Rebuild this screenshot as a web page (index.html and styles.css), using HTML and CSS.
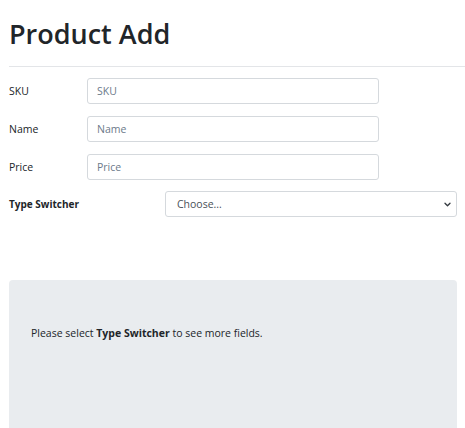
FILE: index.html
```html
<!DOCTYPE html>
<html>
<head>
<meta charset="utf-8">
<link rel="stylesheet" href="styles.css">
</head>
<body>
<div class="page">
  <h1 class="title">Product Add</h1>
  <hr class="rule">
  <form class="form">
    <div class="row">
      <label class="label" for="sku">SKU</label>
      <input class="input" id="sku" placeholder="SKU">
    </div>
    <div class="row">
      <label class="label" for="name">Name</label>
      <input class="input" id="name" placeholder="Name">
    </div>
    <div class="row">
      <label class="label" for="price">Price</label>
      <input class="input" id="price" placeholder="Price">
    </div>
    <div class="row row-type">
      <label class="label label-bold" for="type">Type Switcher</label>
      <div class="select">
        <span class="select-text">Choose...</span>
        <svg class="chevron" width="7" height="5" viewBox="0 0 16 12"><path d="M2 3l6 6 6-6" fill="none" stroke="#343a40" stroke-width="3.2" stroke-linecap="round" stroke-linejoin="round"/></svg>
      </div>
    </div>
  </form>
  <div class="info">
    <p class="info-text">Please select <b>Type Switcher</b> to see more fields.</p>
  </div>
</div>
</body>
</html>
```

FILE: styles.css
```css
* { box-sizing: border-box; }
html, body { margin: 0; padding: 0; background: #fff; }
body {
  font-family: "Open Sans", "Noto Sans", sans-serif;
  color: #212529;
  font-size: 10.5px;
  overflow: hidden;
}
.page {
  padding: 0 0 0 9px;
}
.title {
  margin: 0;
  padding-top: 15px;
  font-size: 27px;
  font-weight: 600;
  line-height: 38px;
  letter-spacing: 0;
  color: #212529;
}
.rule {
  margin: 13px 0 0 0;
  border: 0;
  border-top: 1px solid #e3e5e8;
}
.form {
  margin-top: 11px;
  display: flex;
  flex-direction: column;
  gap: 12px;
}
.row {
  display: flex;
  align-items: center;
  height: 26px;
}
.label {
  width: 78px;
  flex: none;
  font-size: 10.5px;
  color: #212529;
}
.label-bold { font-weight: 700; width: 156px; font-size: 10px; }
.row-type { margin-top: -1px; }
.input {
  width: 292px;
  height: 26px;
  border: 1px solid #d5d9dd;
  border-radius: 3px;
  padding: 0 9px;
  font-family: inherit;
  font-size: 10.5px;
  color: #495057;
  outline: none;
}
.input::placeholder { color: #6c7a8a; }
.select {
  width: 292px;
  height: 26px;
  border: 1px solid #d5d9dd;
  border-radius: 3px;
  padding: 0 5px 0 11px;
  display: flex;
  align-items: center;
  justify-content: space-between;
  font-size: 10.5px;
  color: #495057;
}
.chevron { display: block; }
.info {
  margin-top: 63px;
  width: 448px;
  height: 160px;
  background: #e9ecef;
  border-radius: 4px;
  padding: 44px 22px 0;
}
.info-text {
  margin: 0;
  font-size: 10.5px;
  line-height: 18px;
  color: #212529;
}
.info-text b { font-weight: 700; }
```
